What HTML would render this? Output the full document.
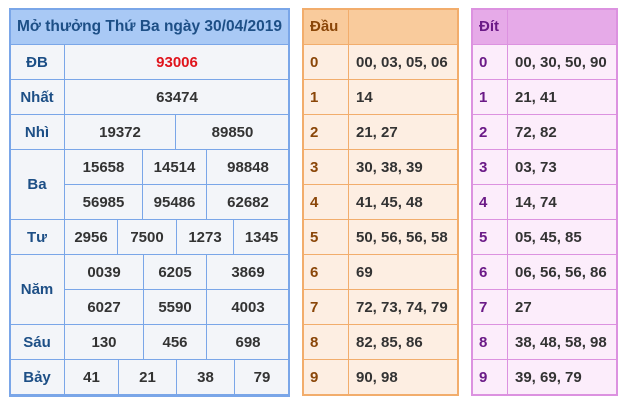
<!DOCTYPE html>
<html><head><meta charset="utf-8"><style>
body{margin:0;width:626px;height:403px;background:#fff;position:relative;overflow:hidden;font-family:"Liberation Sans",Arial,sans-serif;font-weight:bold;font-size:15px;color:#333}
.c{position:absolute;box-sizing:border-box;display:flex;align-items:center;justify-content:center}
.b{border:1px solid #7aa6e8;background:#f3f5f9}
.bl{color:#1d4f86}
.o{border:1px solid #f2ad6c;background:#fdeee2;justify-content:flex-start;padding-left:7px}
.ol{color:#8a4608}
.p{border:1px solid #dc92e0;background:#fcedfb;justify-content:flex-start;padding-left:7px}
.pl{color:#6b1a87}
.frame{position:absolute;box-sizing:border-box;pointer-events:none}
</style></head><body>
<div class="c b" style="left:9px;top:8px;width:281px;height:37px;background:#a9c9f5;color:#1d4f86;font-size:15.5px">Mở thưởng Thứ Ba ngày 30/04/2019</div>
<div class="c b bl" style="left:9px;top:44px;width:56px;height:36px">ĐB</div>
<div class="c b" style="left:64px;top:44px;width:226px;height:36px;color:#e0141c">93006</div>
<div class="c b bl" style="left:9px;top:79px;width:56px;height:36px">Nhất</div>
<div class="c b" style="left:64px;top:79px;width:226px;height:36px">63474</div>
<div class="c b bl" style="left:9px;top:114px;width:56px;height:36px">Nhì</div>
<div class="c b" style="left:64px;top:114px;width:112px;height:36px">19372</div>
<div class="c b" style="left:175px;top:114px;width:115px;height:36px">89850</div>
<div class="c b bl" style="left:9px;top:149px;width:56px;height:71px">Ba</div>
<div class="c b" style="left:64px;top:149px;width:79px;height:36px">15658</div>
<div class="c b" style="left:142px;top:149px;width:65px;height:36px">14514</div>
<div class="c b" style="left:206px;top:149px;width:84px;height:36px">98848</div>
<div class="c b" style="left:64px;top:184px;width:79px;height:36px">56985</div>
<div class="c b" style="left:142px;top:184px;width:65px;height:36px">95486</div>
<div class="c b" style="left:206px;top:184px;width:84px;height:36px">62682</div>
<div class="c b bl" style="left:9px;top:219px;width:56px;height:36px">Tư</div>
<div class="c b" style="left:64px;top:219px;width:54px;height:36px">2956</div>
<div class="c b" style="left:117px;top:219px;width:60px;height:36px">7500</div>
<div class="c b" style="left:176px;top:219px;width:58px;height:36px">1273</div>
<div class="c b" style="left:233px;top:219px;width:57px;height:36px">1345</div>
<div class="c b bl" style="left:9px;top:254px;width:56px;height:71px">Năm</div>
<div class="c b" style="left:64px;top:254px;width:80px;height:36px">0039</div>
<div class="c b" style="left:143px;top:254px;width:64px;height:36px">6205</div>
<div class="c b" style="left:206px;top:254px;width:84px;height:36px">3869</div>
<div class="c b" style="left:64px;top:289px;width:80px;height:36px">6027</div>
<div class="c b" style="left:143px;top:289px;width:64px;height:36px">5590</div>
<div class="c b" style="left:206px;top:289px;width:84px;height:36px">4003</div>
<div class="c b bl" style="left:9px;top:324px;width:56px;height:36px">Sáu</div>
<div class="c b" style="left:64px;top:324px;width:80px;height:36px">130</div>
<div class="c b" style="left:143px;top:324px;width:64px;height:36px">456</div>
<div class="c b" style="left:206px;top:324px;width:84px;height:36px">698</div>
<div class="c b bl" style="left:9px;top:359px;width:56px;height:37px">Bảy</div>
<div class="c b" style="left:64px;top:359px;width:55px;height:37px">41</div>
<div class="c b" style="left:118px;top:359px;width:59px;height:37px">21</div>
<div class="c b" style="left:176px;top:359px;width:59px;height:37px">38</div>
<div class="c b" style="left:234px;top:359px;width:56px;height:37px">79</div>
<div class="frame" style="left:9px;top:8px;width:281px;height:389px;border:2px solid #7aa6e8;border-bottom-width:3px"></div>

<div class="c o ol" style="left:302px;top:8px;width:47px;height:37px;background:#f9cb9c">Đầu</div>
<div class="c o" style="left:348px;top:8px;width:111px;height:37px;background:#f9cb9c"></div>
<div class="c o ol" style="left:302px;top:44px;width:47px;height:36px">0</div><div class="c o" style="left:348px;top:44px;width:111px;height:36px">00, 03, 05, 06</div>
<div class="c o ol" style="left:302px;top:79px;width:47px;height:36px">1</div><div class="c o" style="left:348px;top:79px;width:111px;height:36px">14</div>
<div class="c o ol" style="left:302px;top:114px;width:47px;height:36px">2</div><div class="c o" style="left:348px;top:114px;width:111px;height:36px">21, 27</div>
<div class="c o ol" style="left:302px;top:149px;width:47px;height:36px">3</div><div class="c o" style="left:348px;top:149px;width:111px;height:36px">30, 38, 39</div>
<div class="c o ol" style="left:302px;top:184px;width:47px;height:36px">4</div><div class="c o" style="left:348px;top:184px;width:111px;height:36px">41, 45, 48</div>
<div class="c o ol" style="left:302px;top:219px;width:47px;height:36px">5</div><div class="c o" style="left:348px;top:219px;width:111px;height:36px">50, 56, 56, 58</div>
<div class="c o ol" style="left:302px;top:254px;width:47px;height:36px">6</div><div class="c o" style="left:348px;top:254px;width:111px;height:36px">69</div>
<div class="c o ol" style="left:302px;top:289px;width:47px;height:36px">7</div><div class="c o" style="left:348px;top:289px;width:111px;height:36px">72, 73, 74, 79</div>
<div class="c o ol" style="left:302px;top:324px;width:47px;height:36px">8</div><div class="c o" style="left:348px;top:324px;width:111px;height:36px">82, 85, 86</div>
<div class="c o ol" style="left:302px;top:359px;width:47px;height:36px">9</div><div class="c o" style="left:348px;top:359px;width:111px;height:36px">90, 98</div>
<div class="frame" style="left:302px;top:8px;width:157px;height:388px;border:2px solid #f2ad6c"></div>

<div class="c p pl" style="left:471px;top:8px;width:37px;height:37px;background:#e6aae8">Đít</div>
<div class="c p" style="left:507px;top:8px;width:111px;height:37px;background:#e6aae8"></div>
<div class="c p pl" style="left:471px;top:44px;width:37px;height:36px">0</div><div class="c p" style="left:507px;top:44px;width:111px;height:36px">00, 30, 50, 90</div>
<div class="c p pl" style="left:471px;top:79px;width:37px;height:36px">1</div><div class="c p" style="left:507px;top:79px;width:111px;height:36px">21, 41</div>
<div class="c p pl" style="left:471px;top:114px;width:37px;height:36px">2</div><div class="c p" style="left:507px;top:114px;width:111px;height:36px">72, 82</div>
<div class="c p pl" style="left:471px;top:149px;width:37px;height:36px">3</div><div class="c p" style="left:507px;top:149px;width:111px;height:36px">03, 73</div>
<div class="c p pl" style="left:471px;top:184px;width:37px;height:36px">4</div><div class="c p" style="left:507px;top:184px;width:111px;height:36px">14, 74</div>
<div class="c p pl" style="left:471px;top:219px;width:37px;height:36px">5</div><div class="c p" style="left:507px;top:219px;width:111px;height:36px">05, 45, 85</div>
<div class="c p pl" style="left:471px;top:254px;width:37px;height:36px">6</div><div class="c p" style="left:507px;top:254px;width:111px;height:36px">06, 56, 56, 86</div>
<div class="c p pl" style="left:471px;top:289px;width:37px;height:36px">7</div><div class="c p" style="left:507px;top:289px;width:111px;height:36px">27</div>
<div class="c p pl" style="left:471px;top:324px;width:37px;height:36px">8</div><div class="c p" style="left:507px;top:324px;width:111px;height:36px">38, 48, 58, 98</div>
<div class="c p pl" style="left:471px;top:359px;width:37px;height:36px">9</div><div class="c p" style="left:507px;top:359px;width:111px;height:36px">39, 69, 79</div>
<div class="frame" style="left:471px;top:8px;width:147px;height:388px;border:2px solid #dc92e0"></div>
</body></html>
